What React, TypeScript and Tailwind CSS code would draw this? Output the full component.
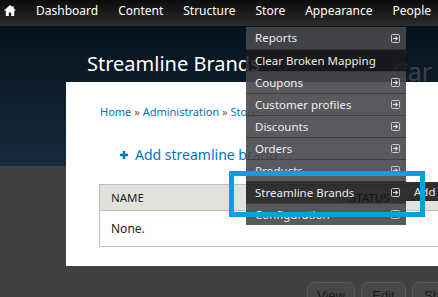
import type { ReactNode } from 'react'

const NAV = ['Dashboard', 'Content', 'Structure', 'Store', 'Appearance', 'People']

const MENU: { label: string; arrow: boolean; tone?: 'hover' | 'active' }[] = [
  { label: 'Reports', arrow: true },
  { label: 'Clear Broken Mapping', arrow: false, tone: 'hover' },
  { label: 'Coupons', arrow: true },
  { label: 'Customer profiles', arrow: true },
  { label: 'Discounts', arrow: true },
  { label: 'Orders', arrow: true },
  { label: 'Products', arrow: true },
  { label: 'Streamline Brands', arrow: true, tone: 'active' },
  { label: 'Configuration', arrow: true },
]

function HomeIcon() {
  return (
    <svg width="12" height="11" viewBox="0 0 12 11" aria-hidden="true">
      <path d="M6 0L0 5.5h1.8V11h3V7.6h2.4V11h3V5.5H12L9.6 3.3V1H8.4v1.2z" fill="#fff" />
    </svg>
  )
}

function SubArrow() {
  return (
    <svg width="9" height="9" viewBox="0 0 9 9" aria-hidden="true">
      <rect x="0.5" y="0.5" width="8" height="8" rx="1" fill="none" stroke="#c8c8c8" />
      <path d="M2 4.5h4.3M4.5 2.6l1.9 1.9-1.9 1.9" fill="none" stroke="#e0e0e0" strokeWidth="1.1" />
    </svg>
  )
}

function Tab({ w, children }: { w: string; children: ReactNode }) {
  return (
    <div
      className={`${w} h-[24px] shrink-0 rounded-t-[7px] border border-[#575757] bg-[#474747] pt-[5px] text-center font-['Liberation_Sans',sans-serif] text-[13px] leading-4 text-[#1c1c1c]`}
    >
      {children}
    </div>
  )
}

export default function App() {
  return (
    <div className="relative h-[297px] w-[438px] overflow-hidden bg-[#414141] font-['Noto_Sans',sans-serif]">
      {/* toolbar */}
      <div className="flex h-[26px] items-start bg-gradient-to-b from-[#0c0c0c] to-[#2d2d2d] pt-[3px] text-[12px] leading-4 text-white">
        <span className="ml-[4px] mr-[10px] mt-[2px] flex">
          <HomeIcon />
        </span>
        {NAV.map((n) => (
          <span key={n} className="whitespace-nowrap px-[10px]">
            {n}
          </span>
        ))}
      </div>

      {/* overlay header */}
      <div className="relative h-[140px] bg-gradient-to-b from-[#06121c] to-[#172c3e] pl-[87px] pt-[28px]">
        <h1 className="text-[20px] leading-5 text-white">Streamline Brands</h1>
        <span className="absolute left-[278px] top-[37px] h-[9px] w-[9px] rounded-full border border-[#777]" />
        <span className="absolute left-[392px] top-[29px] text-[25px] leading-8 text-[#3a424b]">Car</span>
      </div>

      {/* overlay body */}
      <div className="relative -mt-[84px] ml-[66px] h-[184px] w-[400px] bg-white pl-[33px] pt-[23px]">
        <div className="whitespace-nowrap pl-[1px] text-[11px] leading-[14px] text-[#0074bd]">
          Home <span className="text-[#7a5530]">»</span> Administration{' '}
          <span className="text-[#7a5530]">»</span> Store
        </div>
        <div className="ml-[21px] mt-[27px] flex items-center gap-[7px] whitespace-nowrap text-[14px] leading-[18px] text-[#0074bd]">
          <svg width="8" height="8" viewBox="0 0 8 8" aria-hidden="true">
            <path d="M2.8 0h2.4v2.8H8v2.4H5.2V8H2.8V5.2H0V2.8h2.8z" fill="#0074bd" />
          </svg>
          Add streamline brand
        </div>
        <div className="mt-[20px] w-[400px] border border-[#bebfb9] text-[#222]">
          <div className="flex h-[26px] items-center border-b border-[#bebfb9] bg-[#e1e2dc] text-[11.5px] leading-[14px]">
            <span className="w-[240px] border-r border-[#bebfb9] pl-[11px]">NAME</span>
            <span className="pl-[10px]">STATUS</span>
          </div>
          <div className="flex h-[35px] items-center pl-[11px] text-[12px] leading-4">None.</div>
        </div>
      </div>

      {/* tabs of the page behind */}
      <div className="ml-[307px] mt-[16px] flex gap-[6px]">
        <Tab w="w-[48px]">View</Tab>
        <Tab w="w-[45px]">Edit</Tab>
        <Tab w="w-[40px]">Sh</Tab>
      </div>

      {/* dropdown menu */}
      <div className="absolute left-[246px] top-[27px] z-10 w-[160px] text-[11.5px] leading-4 text-[#ececec]">
        {MENU.map((m, i) => (
          <div
            key={m.label}
            className={`flex h-[22px] items-center justify-between whitespace-nowrap pl-[9px] pr-[6px] ${
              i > 0 ? 'border-t border-[#343436]/70' : ''
            } ${
              m.tone === 'hover'
                ? 'bg-[#1a1a1c]/85'
                : m.tone === 'active'
                  ? 'bg-[#101010]/85'
                  : 'bg-[#48484c]/90'
            }`}
          >
            <span>{m.label}</span>
            {m.arrow && <SubArrow />}
          </div>
        ))}
      </div>

      {/* sub menu */}
      <div className="absolute left-[406px] top-[182px] z-10 flex h-[19px] w-[40px] items-center bg-[#1c1c1c]/90 pl-[8px] text-[11.5px] leading-4 text-[#e6e6e6]">
        Add
      </div>

      {/* highlight */}
      <div className="absolute left-[229px] top-[171px] z-20 h-[46px] w-[196px] border-[5px] border-[#03a1df]" />
    </div>
  )
}
